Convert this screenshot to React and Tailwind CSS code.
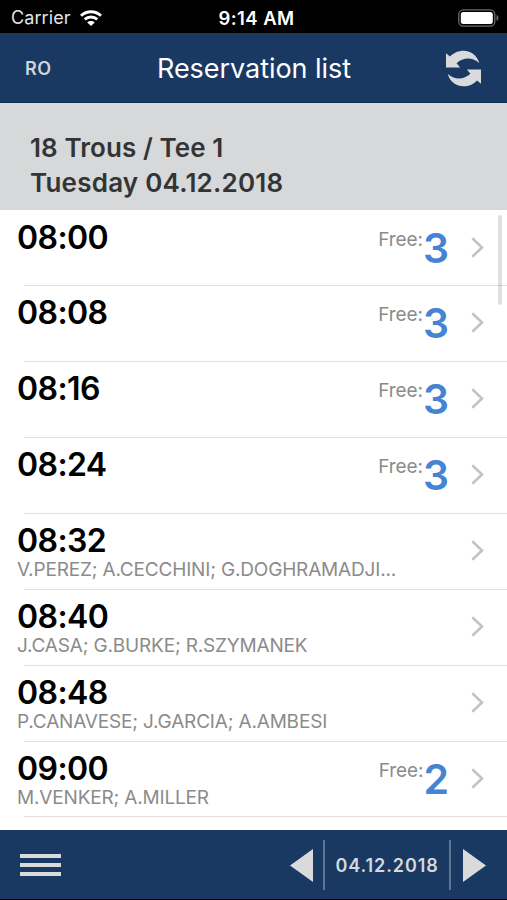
const slots = [
  { time: "08:00", free: 3 },
  { time: "08:08", free: 3 },
  { time: "08:16", free: 3 },
  { time: "08:24", free: 3 },
  { time: "08:32", players: "V.PEREZ; A.CECCHINI; G.DOGHRAMADJI..." },
  { time: "08:40", players: "J.CASA; G.BURKE; R.SZYMANEK" },
  { time: "08:48", players: "P.CANAVESE; J.GARCIA; A.AMBESI" },
  { time: "09:00", players: "M.VENKER; A.MILLER", free: 2 },
];

function StatusBar() {
  return (
    <div className="h-[33px] shrink-0 bg-black text-white grid grid-cols-3 items-center pt-[3px] pl-[11px] pr-[8px]">
      <div className="flex items-center gap-[9px]">
        <span className="text-[18px] leading-6 tracking-[0.1px] text-[#e4e4e4]">Carrier</span>
        <svg width="22" height="16" viewBox="0 0 22 16" fill="none" stroke="#fff" strokeWidth="2.9">
          <path d="M1 5.8C6.7 .4 15.3 .4 21 5.8" />
          <path d="M4.7 9.4c3.6-3.3 9-3.3 12.6 0" />
          <path d="M11 16 7.3 12.4c2.1-1.9 5.3-1.9 7.4 0Z" fill="#fff" stroke="none" />
        </svg>
      </div>
      <span className="text-[18.5px] leading-6 font-semibold text-center whitespace-nowrap tracking-[0.45px] pl-[3px]">9:14 AM</span>
      <svg className="justify-self-end" width="41" height="18" viewBox="0 0 41 18">
        <rect x=".8" y=".8" width="36" height="16.4" rx="4.5" fill="none" stroke="#6b6b6b" strokeWidth="1.3" />
        <rect x="2.8" y="2.9" width="32" height="12.2" rx="2.5" fill="#fff" />
        <path d="M38.5 6c2.6 1 2.6 5 0 6Z" fill="#6b6b6b" />
      </svg>
    </div>
  );
}

function RefreshIcon() {
  return (
    <svg width="35" height="37" viewBox="0 0 106 110" fill="#d9dadc">
      <path d="M0 9 12 19C36-8 88-7 101 39 84 22 54 18 32 39L43 52H0Z" />
      <path d="M106 101 94 91C70 118 18 117 5 71 22 88 52 92 74 71L63 58H106Z" />
    </svg>
  );
}

function SlotRow({ slot }) {
  return (
    <div className="h-[75.86px] shrink-0 flex flex-col">
      <div className="flex-1 min-h-0 flex pl-[17px] pr-[23px]">
        <div className="flex-1 min-w-0 pt-[9px]">
          <div className="text-[32px] leading-[36px] font-semibold tracking-[-0.6px] text-black">{slot.time}</div>
          <div className="text-[19px] leading-[21px] text-[#8b8b8b] whitespace-nowrap tracking-[-0.17px]">
            {slot.players}
          </div>
        </div>
        {slot.free && (
          <div className="flex items-start text-[#8b8b8b]">
            <span className="text-[19px] leading-6 pt-[17px] tracking-[-0.1px]">Free:</span>
            <span className="text-[41px] leading-[48px] pt-[13px] font-semibold text-[#4683d3]">{slot.free}</span>
          </div>
        )}
        <svg className="mt-[26px] ml-[22px] shrink-0" width="13" height="21" viewBox="0 0 13 21" fill="none" stroke="#c3c3c6" strokeWidth="2.6">
          <path d="M1.3 1.3 11 10.5 1.3 19.7" />
        </svg>
      </div>
      <div className="h-px ml-[24px] bg-[#dfdfe0]" />
    </div>
  );
}

export default function App() {
  return (
    <div className="w-[507px] h-[900px] overflow-hidden flex flex-col bg-white font-['Inter','Liberation_Sans',sans-serif]">
      <StatusBar />

      <header className="h-[70px] shrink-0 bg-[#193963] flex items-center justify-between pt-[2px] pl-[25px] pr-[26px] border-b border-[#102b4e]">
        <span className="w-[37px] text-[18px] font-semibold tracking-[0.6px] text-[#cfd4dc]">RO</span>
        <h1 className="text-[27px] text-white whitespace-nowrap tracking-[-0.05px] pt-[2px]">Reservation list</h1>
        <RefreshIcon />
      </header>

      <div className="h-[107px] shrink-0 bg-[#d7d8da] pl-[30px] pt-[27px] text-[26px] leading-[35px] font-semibold text-[#333435]">
        <div className="tracking-[0.08px]">18 Trous / Tee 1</div>
        <div className="tracking-[0.22px]">Tuesday 04.12.2018</div>
      </div>

      <main className="relative flex-1 min-h-0 overflow-hidden flex flex-col pt-[0.5px]">
        {slots.map((slot) => (
          <SlotRow key={slot.time} slot={slot} />
        ))}
        {/* scroll indicator */}
        <div className="absolute right-[5px] top-[5px] w-[4px] h-[90px] rounded-full bg-black/12" />
      </main>

      <footer className="h-[70px] shrink-0 bg-[#193963] border-b border-black flex items-center justify-between pl-[20px] pr-[21px]">
        <div className="flex flex-col gap-[5px]">
          <div className="w-[41px] h-[4px] bg-[#d9dadc]" />
          <div className="w-[41px] h-[4px] bg-[#d9dadc]" />
          <div className="w-[41px] h-[4px] bg-[#d9dadc]" />
        </div>
        <div className="flex items-center pt-px">
          <svg width="23" height="33" viewBox="0 0 23 33" fill="#d9dadc">
            <path d="M23 0V33L0 16.5Z" />
          </svg>
          <div className="ml-[10px] mr-[12px] w-[128px] h-[50px] border-x-2 border-[#5d7593] flex items-center justify-center text-[18px] font-semibold tracking-[0.9px] text-[#d5d8dd] whitespace-nowrap">
            04.12.2018
          </div>
          <svg width="23" height="33" viewBox="0 0 23 33" fill="#d9dadc">
            <path d="M0 0V33L23 16.5Z" />
          </svg>
        </div>
      </footer>
    </div>
  );
}
